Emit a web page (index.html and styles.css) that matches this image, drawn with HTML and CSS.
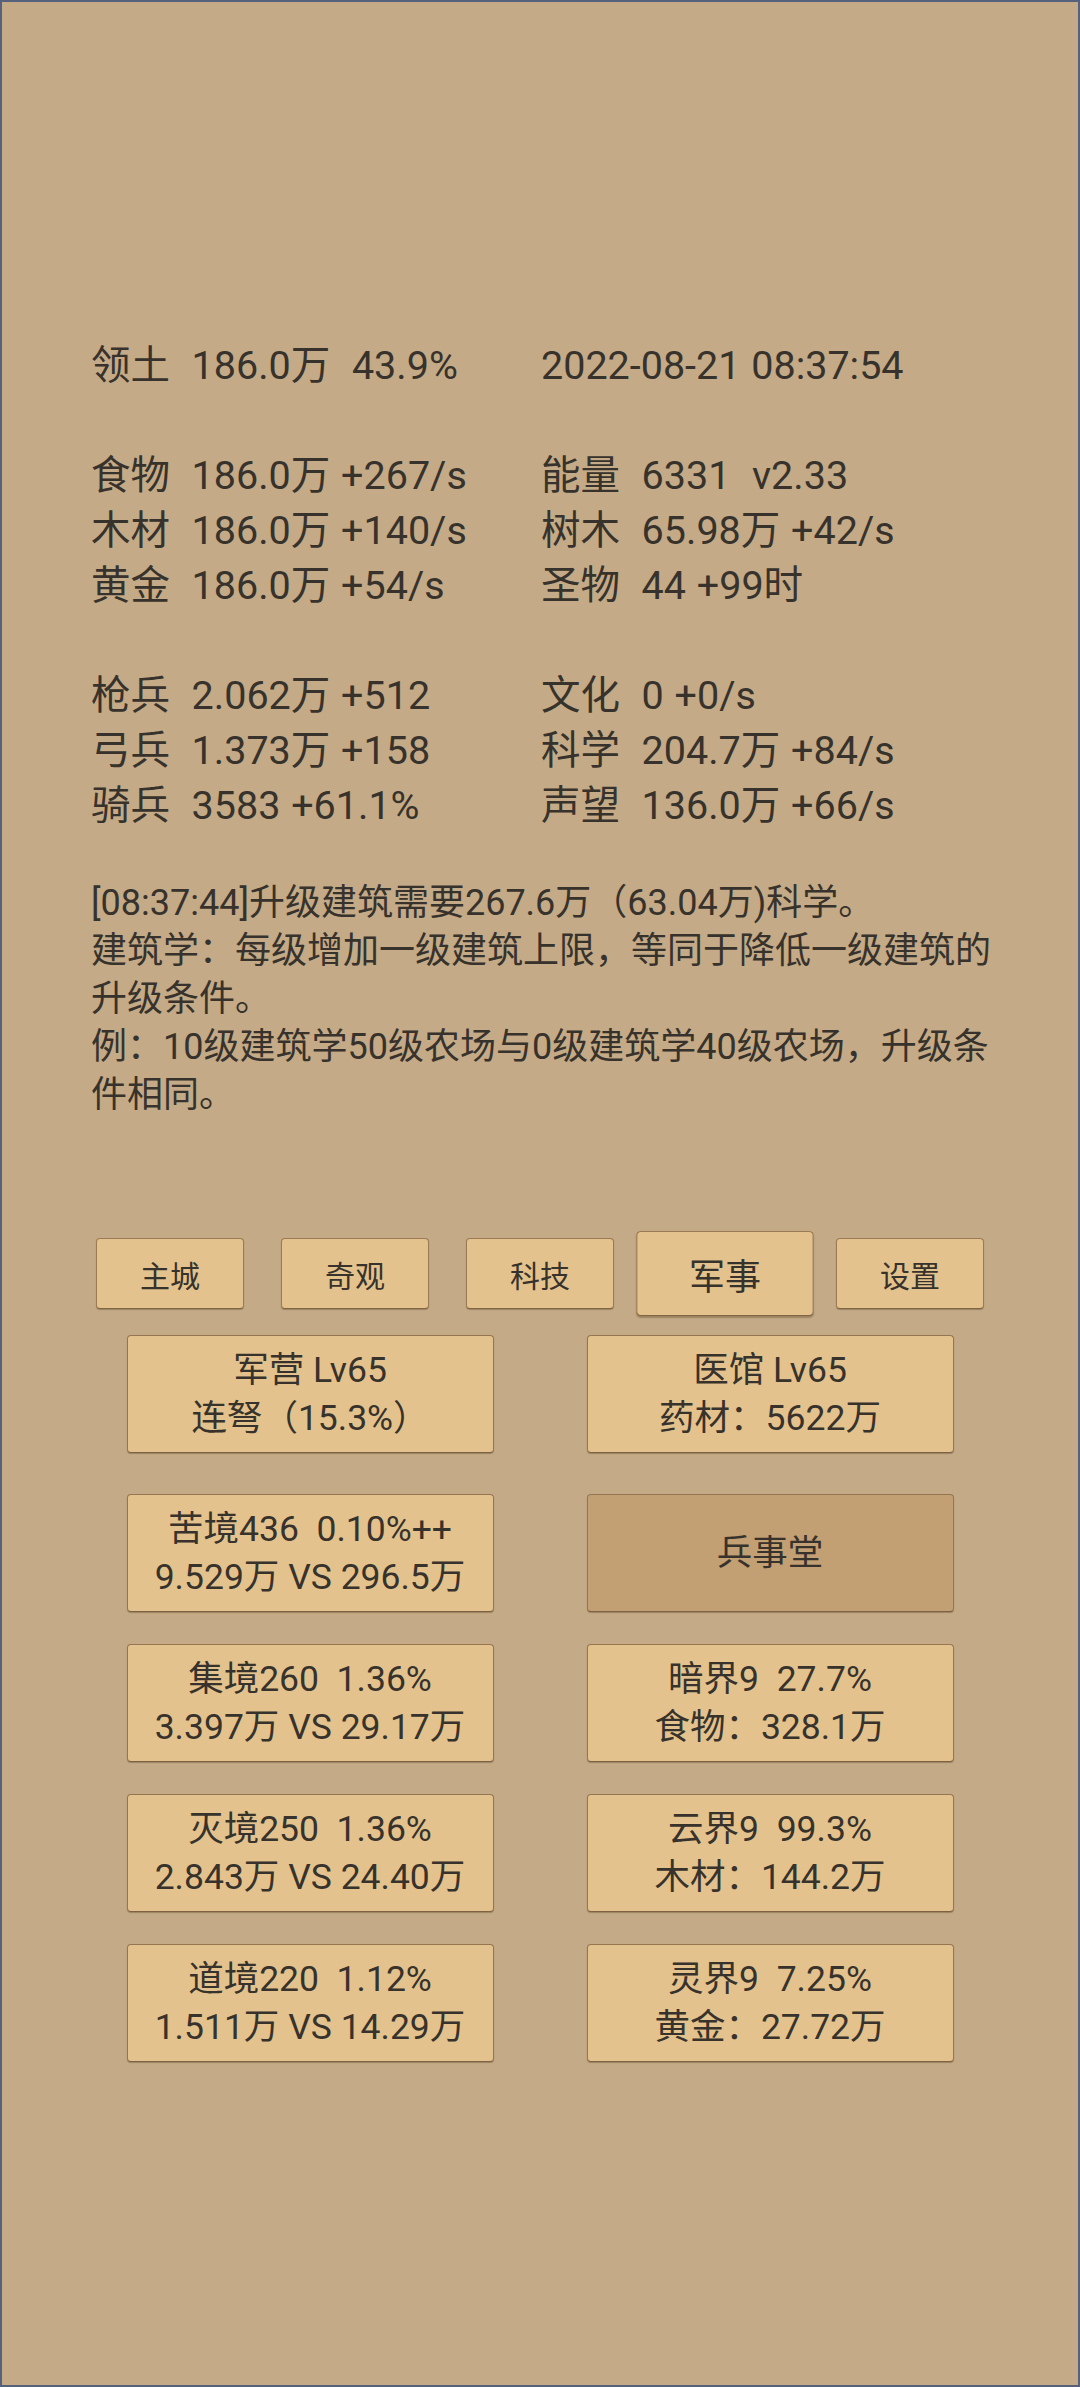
FILE: index.html
```html
<!DOCTYPE html>
<html lang="zh-CN">
<head>
<meta charset="utf-8">
<title>军事</title>
<link rel="stylesheet" href="styles.css">
</head>
<body>
<div class="screen">
  <div class="stats">
    <div class="row"><span>领土  186.0万  43.9%</span><span>2022-08-21 08:37:54</span></div>
    <div class="row blank"></div>
    <div class="row"><span>食物  186.0万 +267/s</span><span>能量  6331  v2.33</span></div>
    <div class="row"><span>木材  186.0万 +140/s</span><span>树木  65.98万 +42/s</span></div>
    <div class="row"><span>黄金  186.0万 +54/s</span><span>圣物  44 +99时</span></div>
    <div class="row blank"></div>
    <div class="row"><span>枪兵  2.062万 +512</span><span>文化  0 +0/s</span></div>
    <div class="row"><span>弓兵  1.373万 +158</span><span>科学  204.7万 +84/s</span></div>
    <div class="row"><span>骑兵  3583 +61.1%</span><span>声望  136.0万 +66/s</span></div>
  </div>

  <div class="log">
    <div class="line">[08:37:44]升级建筑需要267.6万（63.04万)科学。</div>
    <div class="line">建筑学：每级增加一级建筑上限，等同于降低一级建筑的</div>
    <div class="line">升级条件。</div>
    <div class="line">例：10级建筑学50级农场与0级建筑学40级农场，升级条</div>
    <div class="line">件相同。</div>
  </div>

  <div class="tabs">
    <div class="tab">主城</div>
    <div class="tab">奇观</div>
    <div class="tab">科技</div>
    <div class="tab active">军事</div>
    <div class="tab">设置</div>
  </div>

  <div class="cards first">
    <div class="card"><div>军营 Lv65</div><div>连弩（15.3%）</div></div>
    <div class="card"><div>医馆 Lv65</div><div>药材：5622万</div></div>
  </div>
  <div class="cards">
    <div class="card"><div>苦境436  0.10%++</div><div>9.529万 VS 296.5万</div></div>
    <div class="card selected"><div>兵事堂</div></div>
    <div class="card"><div>集境260  1.36%</div><div>3.397万 VS 29.17万</div></div>
    <div class="card"><div>暗界9  27.7%</div><div>食物：328.1万</div></div>
    <div class="card"><div>灭境250  1.36%</div><div>2.843万 VS 24.40万</div></div>
    <div class="card"><div>云界9  99.3%</div><div>木材：144.2万</div></div>
    <div class="card"><div>道境220  1.12%</div><div>1.511万 VS 14.29万</div></div>
    <div class="card"><div>灵界9  7.25%</div><div>黄金：27.72万</div></div>
  </div>
</div>
</body>
</html>
```

FILE: styles.css
```css
html, body {
  margin: 0;
  padding: 0;
}

body {
  background: #c4aa87;
  font-family: Roboto, "Noto Sans CJK SC", sans-serif;
  color: #37322b;
}

.screen {
  box-sizing: border-box;
  width: 1080px;
  height: 2387px;
  border: 2px solid #56617b;
  background: #c4aa87;
  padding-top: 336px;
}

.stats {
  padding-left: 89px;
  font-size: 39.5px;
  line-height: 55px;
}

.row {
  display: grid;
  grid-template-columns: 450px 1fr;
  height: 55px;
  white-space: pre;
  word-spacing: 1px;
}

.log {
  margin-top: 46px;
  padding-left: 89px;
  font-size: 36px;
  line-height: 48px;
  white-space: nowrap;
}

.tabs {
  margin-top: 119px;
  display: flex;
  justify-content: center;
  gap: 37px;
}

.tab {
  box-sizing: border-box;
  width: 148px;
  height: 71px;
  background: #e4c28d;
  border: 1px solid #9a7b55;
  border-bottom-color: #806443;
  border-radius: 4px;
  box-shadow: 0 1px 1px rgba(80, 60, 30, 0.35);
  display: flex;
  align-items: center;
  justify-content: center;
  font-size: 30px;
}

.tab.active {
  transform: scale(1.2);
}

.cards {
  display: grid;
  grid-template-columns: 367px 367px;
  justify-content: center;
  column-gap: 93px;
  row-gap: 32px;
}

.cards.first {
  margin-top: 26px;
  margin-bottom: 41px;
}

.card {
  box-sizing: border-box;
  height: 118px;
  background: #e4c28d;
  border: 1px solid #957651;
  border-bottom-color: #7d6142;
  border-radius: 4px;
  box-shadow: 0 1px 1px rgba(80, 60, 30, 0.35);
  display: flex;
  flex-direction: column;
  align-items: center;
  justify-content: center;
  font-size: 35.5px;
  line-height: 48px;
  white-space: pre;
}

.card.selected {
  background: #c3a073;
}
```
